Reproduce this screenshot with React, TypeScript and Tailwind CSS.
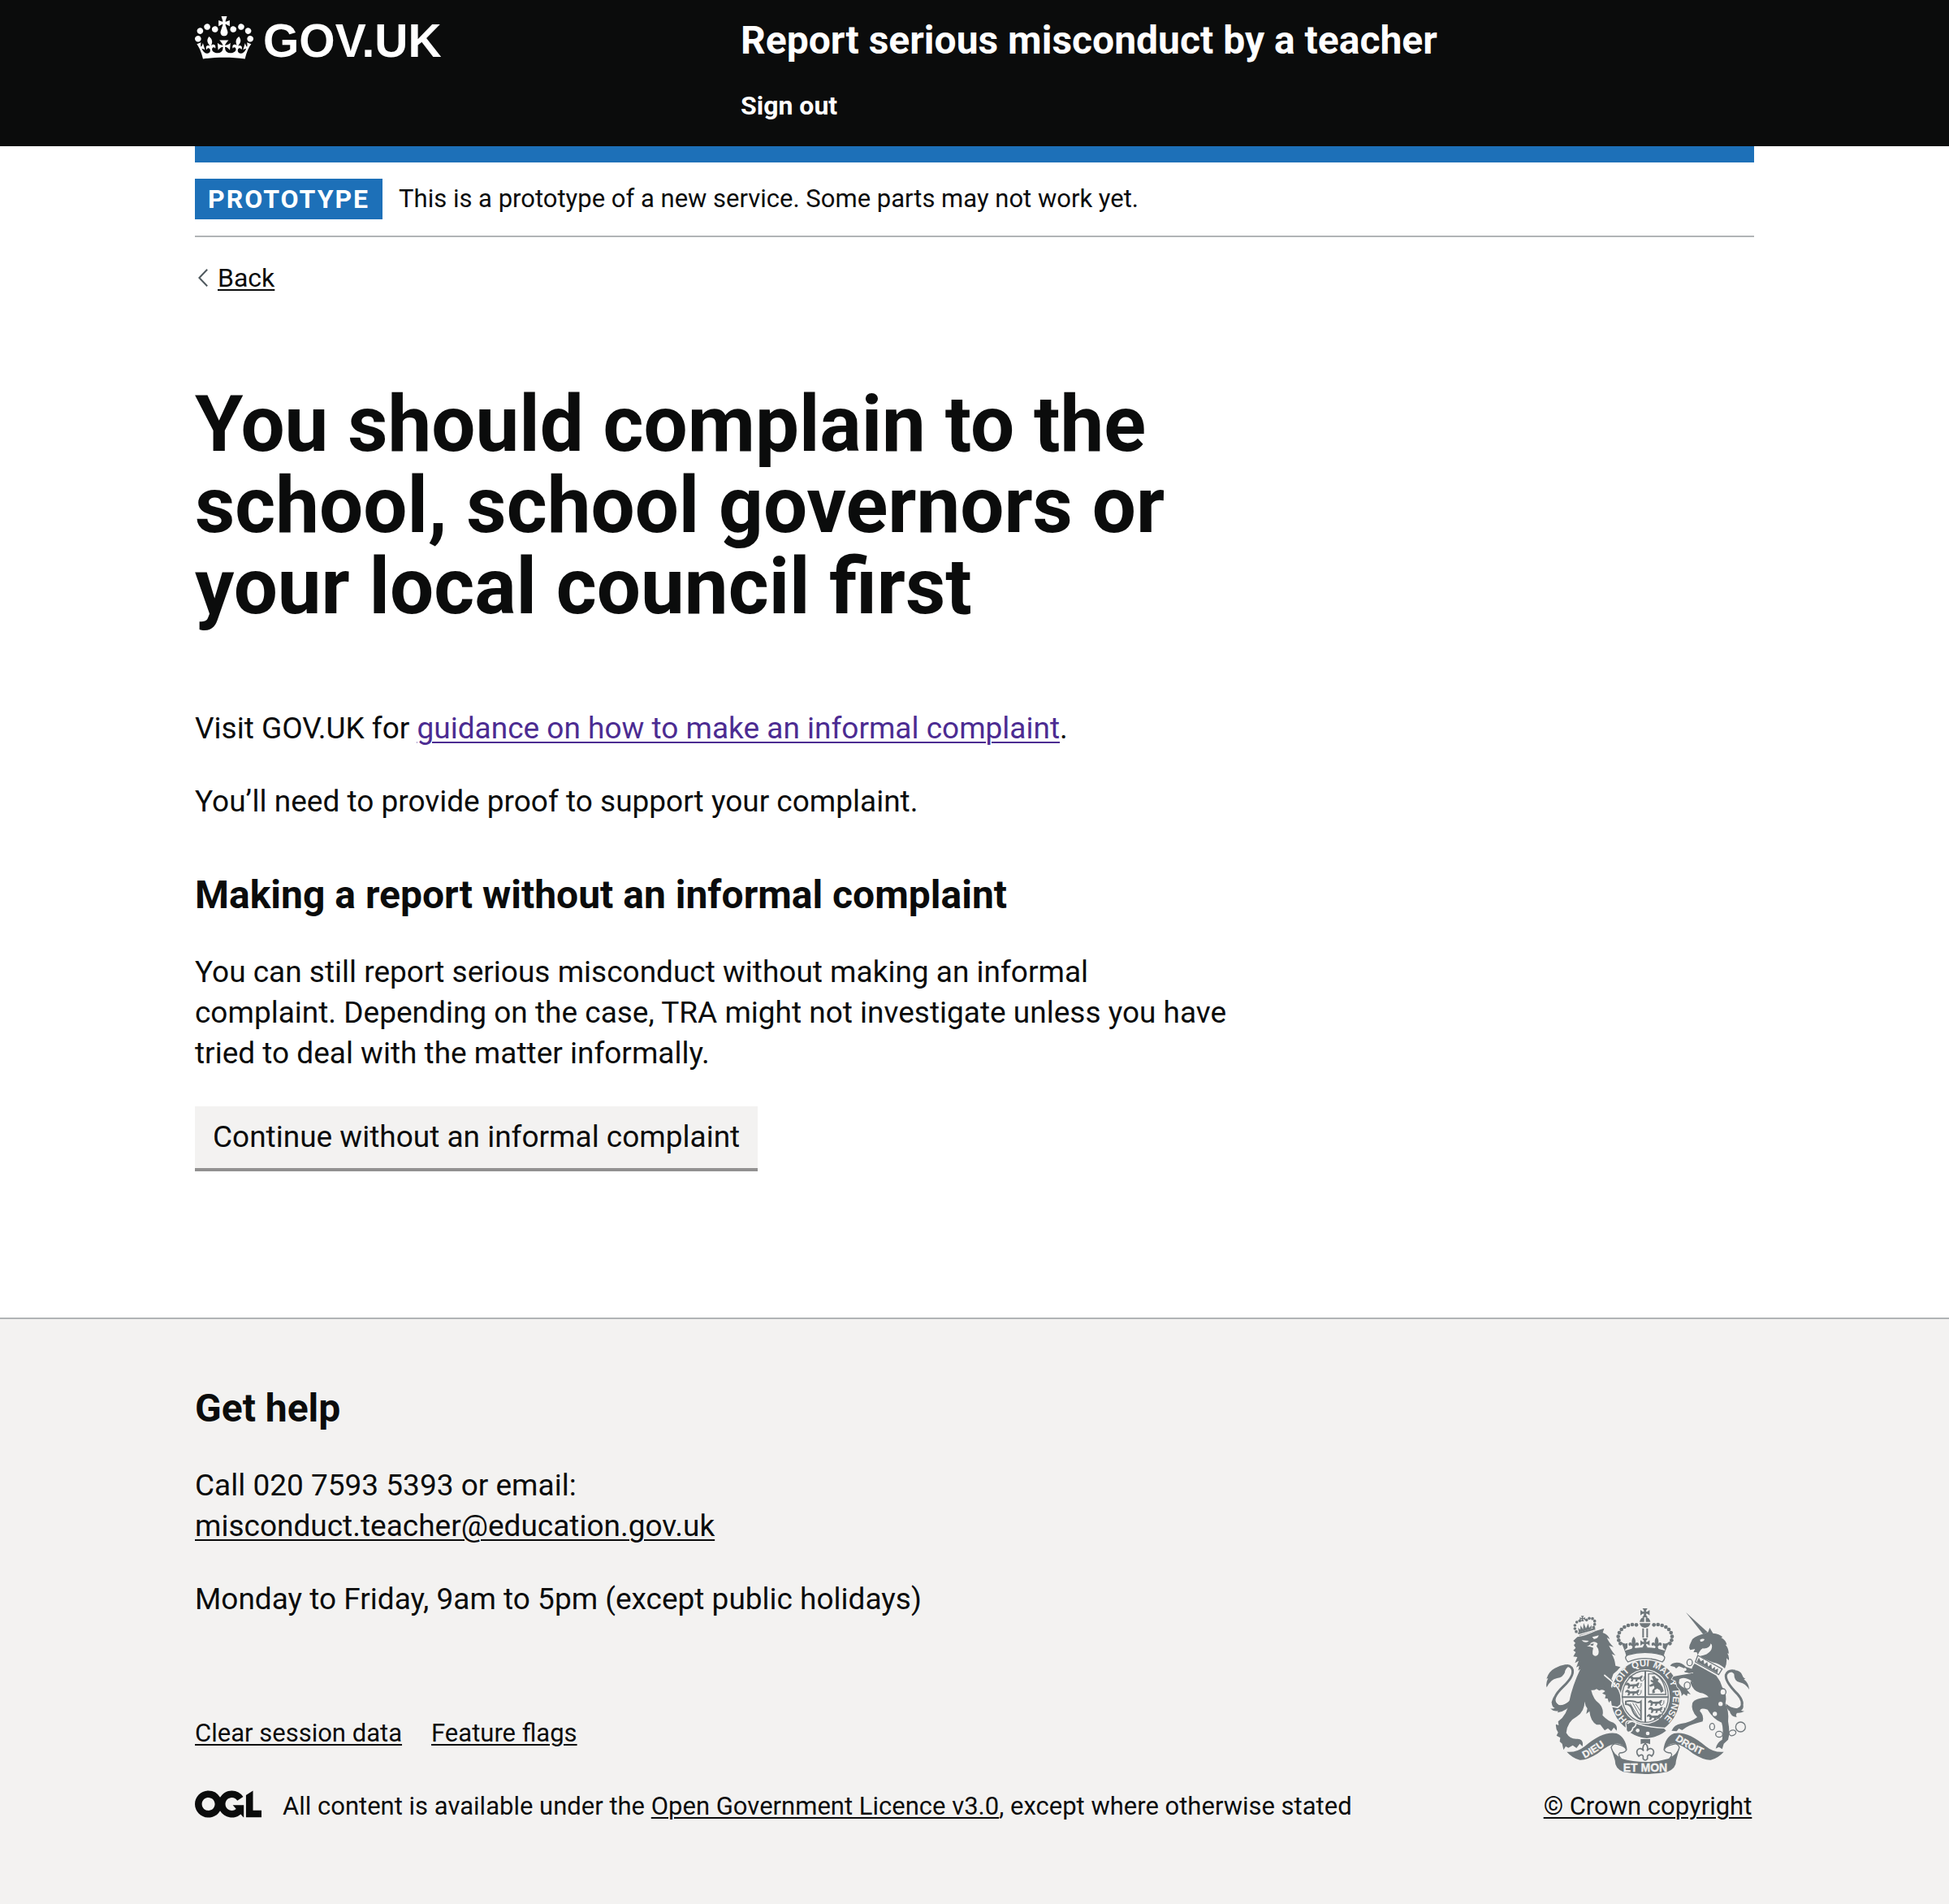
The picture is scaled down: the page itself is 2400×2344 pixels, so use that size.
import type { ReactNode } from "react";

const INK = "#6f777b";
const PAPER = "#f3f2f1";

function Crown() {
  return (
    <svg aria-hidden="true" focusable="false" viewBox="0 0 132 97" className="h-[53px] w-[72px] shrink-0" fill="currentColor">
      <path
        fillRule="evenodd"
        d="M25 30.2c3.5 1.5 7.7-.2 9.1-3.7 1.5-3.6-.2-7.8-3.9-9.2-3.6-1.4-7.6.3-9.1 3.9-1.4 3.5.3 7.5 3.9 9zM9 39.5c3.6 1.5 7.8-.2 9.2-3.7 1.5-3.6-.2-7.8-3.9-9.1-3.6-1.5-7.6.2-9.1 3.8-1.4 3.5.3 7.5 3.8 9zM4.4 57.2c3.5 1.5 7.7-.2 9.1-3.8 1.5-3.6-.2-7.7-3.9-9.1-3.5-1.5-7.6.3-9.1 3.8-1.4 3.5.3 7.6 3.9 9.1zm38.3-21.4c3.5 1.5 7.7-.2 9.1-3.8 1.5-3.6-.2-7.7-3.9-9.1-3.6-1.5-7.6.3-9.1 3.8-1.3 3.6.4 7.7 3.9 9.1zm64.4-5.6c-3.6 1.5-7.8-.2-9.1-3.7-1.5-3.6.2-7.8 3.8-9.2 3.6-1.4 7.7.3 9.2 3.9 1.3 3.5-.4 7.5-3.9 9zm15.9 9.3c-3.6 1.5-7.7-.2-9.1-3.7-1.5-3.6.2-7.8 3.7-9.1 3.6-1.5 7.7.2 9.2 3.8 1.5 3.5-.3 7.5-3.8 9zm4.7 17.7c-3.6 1.5-7.8-.2-9.2-3.8-1.5-3.6.2-7.7 3.9-9.1 3.6-1.5 7.7.3 9.2 3.8 1.3 3.5-.4 7.6-3.9 9.1zM89.3 35.8c-3.6 1.5-7.8-.2-9.2-3.8-1.4-3.6.2-7.7 3.9-9.1 3.6-1.5 7.7.3 9.2 3.8 1.4 3.6-.3 7.7-3.9 9.1zM69.7 17.7l8.9 4.7V9.3l-8.9 2.8c-.2-.3-.5-.6-.9-.9L72.4 0H59.6l3.5 11.2c-.3.3-.6.5-.9.9l-8.8-2.8v13.1l8.8-4.7c.3.3.6.7.9.9l-5 15.4v.1c-.2.8-.4 1.6-.4 2.4 0 4.1 3.1 7.5 7 8.1h.2c.3 0 .7.1 1 .1.4 0 .7 0 1-.1h.2c4-.6 7.1-4.1 7.1-8.1 0-.8-.1-1.7-.4-2.4V34l-5.1-15.4c.4-.2.7-.6 1-.9zM66 92.8c16.9 0 32.8 1.1 47.1 3.2 4-16.9 8.9-26.7 14-33.5l-9.6-3.4c1 4.9 1.1 7.2 0 10.2-1.5-1.4-3-4.3-4.2-8.7L108.6 76c2.8-2 5-3.2 7.5-3.3-4.4 9.4-10 11.9-13.6 11.2-4.3-.8-6.3-4.6-5.6-7.9 1-4.7 5.7-5.9 8-.5 4.3-8.7-3-11.4-7.6-8.8 7.1-7.2 7.9-13.5 2.1-21.1-8 6.1-8.1 12.3-4.5 20.8-4.7-5.4-12.1-2.5-9.5 6.2 3.4-5.2 7.9-2 7.2 3.1-.6 4.3-6.4 7.8-13.5 7.2-10.3-.9-10.9-8-11.2-13.8 2.5-.5 7.1 1.8 11 7.3L80.2 60c-4.1 4.4-8 5.3-12.3 5.4 1.4-4.4 8-11.6 8-11.6H55.5s6.4 7.2 7.9 11.6c-4.2-.1-8-1-12.3-5.4l1.4 16.4c3.9-5.5 8.5-7.7 10.9-7.3-.3 5.8-.9 12.8-11.1 13.8-7.2.6-12.9-2.9-13.5-7.2-.7-5 3.8-8.3 7.1-3.1 2.7-8.7-4.6-11.6-9.4-6.2 3.7-8.5 3.6-14.7-4.6-20.8-5.8 7.6-5 13.9 2.2 21.1-4.7-2.6-11.9.1-7.7 8.8 2.3-5.5 7.1-4.2 8.1.5.7 3.3-1.3 7.1-5.7 7.9-3.5.7-9-1.8-13.5-11.2 2.5.1 4.7 1.3 7.5 3.3l-4.7-15.4c-1.2 4.4-2.7 7.2-4.3 8.7-1.1-3-.9-5.3 0-10.2l-9.5 3.4c5 6.9 9.9 16.7 14 33.5 14.8-2.1 30.8-3.2 47.7-3.2z"
      />
    </svg>
  );
}

function LicenceLogo() {
  return (
    <svg aria-hidden="true" focusable="false" viewBox="0 0 483.2 195.7" className="h-[34px] w-[82px] shrink-0" fill="currentColor">
      <path d="M421.5 142.8V.1l-50.7 32.3v161.1h112.4v-50.7zm-122.3-9.6A47.12 47.12 0 0 1 221 97.8c0-26 21.1-47.1 47.1-47.1 16.7 0 31.4 8.7 39.7 21.8l42.7-27.2A97.63 97.63 0 0 0 268.1 0c-36.5 0-68.3 20.1-85.1 49.7A98 98 0 0 0 97.8 0C43.9 0 0 43.9 0 97.8s43.9 97.8 97.8 97.8c36.5 0 68.3-20.1 85.1-49.7a97.76 97.76 0 0 0 149.6 25.4l19.4 22.2h3v-87.8h-80l24.3 27.5zM97.8 145c-26 0-47.1-21.1-47.1-47.1s21.1-47.1 47.1-47.1 47.1 21.1 47.1 47.1S123.8 145 97.8 145" />
    </svg>
  );
}

const archPearls: [number, number][] = [
  [405, 121], [390, 120], [375, 123], [361, 129], [350, 138], [342, 150], [338, 164], [340, 178], [346, 190],
];
const lionPearls: [number, number][] = [
  [183, 146], [178, 135], [178, 123], [185, 111], [196, 106], [221, 103], [231, 97], [243, 98], [251, 107], [251, 119], [247, 130],
];
const mottoWords: [string, number][] = [["HO", 100], ["SOIT", 235], ["QUI", 319], ["MAL", 399], ["Y", 457], ["PENSE", 538]];

function Passant({ x, y }: { x: number; y: number }) {
  return (
    <g transform={`translate(${x} ${y})`}>
      <path d="M0 6l8-6 6 3 4 4 22-1 8-6 6 2-5 4 3 3-5 2v6l6 4h-8l-3-7-8 1-2 7h-7l3-7-9-1-4 8h-7l3-9-5-4-5 3z" />
      <path d="M52 20q9-6 7-18" fill="none" stroke={INK} strokeWidth="3" />
    </g>
  );
}

function CrossPattee({ x, y, r }: { x: number; y: number; r: number }) {
  return (
    <path
      transform={`translate(${x} ${y}) scale(${r})`}
      d="M-.6-1H.6Q.2-.6.2-.2.6-.2 1-.6V.6Q.6.2.2.2.2.6.6 1H-.6Q-.2.6-.2.2-.6.2-1 .6V-.6Q-.6-.2-.2-.2-.2-.6-.6-1Z"
    />
  );
}

function Fleur({ x, y }: { x: number; y: number }) {
  return (
    <path
      transform={`translate(${x} ${y})`}
      d="M0-22Q11-8 5 5q4-8 11-4 6 5 0 12-5-5-9 0l-3 3 3 8h-14l3-8-3-3q-4-5-9 0-6-7 0-12 7-4 11 4-6-13 5-27Z"
    />
  );
}

function RoyalArms() {
  return (
    <svg aria-hidden="true" focusable="false" viewBox="72 60 750 612" className="h-[204px] w-[250px]" fill={INK} fontFamily='"Liberation Sans", Arial, sans-serif' fontWeight="700">
      {/* Lion: crown, tail, body */}
      {lionPearls.map(([x, y]) => (
        <circle key={`${x}-${y}`} cx={x} cy={y} r="5.5" />
      ))}
      <CrossPattee x={206} y={98} r={10} />
      <path d="M188 150L252 132 255 142 195 161Z" />
      <path d="M192 146l-2-14 8 7 1-16 9 15 2-24 9 20 8-18 4 16 9-10-1 14-47 14Z" />
      <path d="M192 158L258 139" stroke={PAPER} strokeWidth="4" />
      <path d="M170 395Q132 438 108 416Q88 394 134 350Q182 304 166 280Q152 264 134 278" fill="none" stroke={INK} strokeWidth="9" />
      <path d="M158 272Q142 282 141 296Q135 314 112 318Q88 322 74 352Q69 338 79 318L73 320Q82 292 104 281Q124 270 142 268Z" />
      <path d="M100 385Q90 410 92 408Q94 426 104 428Q94 433 87 428Q98 442 116 439L114 445Q150 440 176 402L162 400Q142 420 118 417Q106 410 100 385Z" />
      <path d="M172 180L187 166Q220 160 256 143L286 134L281 150Q300 156 307 174L296 168Q304 188 321 203L304 198Q312 216 328 234L314 229Q325 246 328 272L346 277L334 290L320 302L313 322L338 348Q350 372 350 398L348 412L338 421L330 410L321 419L316 404L303 407L304 394L289 392L292 380L279 374L290 366Q280 356 268 364L258 358Q248 364 238 362Q246 396 268 412Q286 432 280 455Q300 476 320 482Q337 492 332 512L322 500L312 514L300 503L288 511L272 490L258 490Q235 475 232 440L220 450L224 430Q216 420 214 404Q214 440 185 460Q150 478 146 520Q160 545 188 542Q212 544 206 570L196 560L184 576L170 566L154 575L144 570L136 583L131 560L122 552L124 538L110 530L116 518Q106 505 108 488L118 492L116 478Q150 455 158 400Q168 348 198 284L190 290L194 272L183 278L192 254L178 262L187 240L172 238L181 222L172 215L181 206L174 196L180 188Z" />
      <g fill={PAPER}>
        <path d="M203 178L230 180Q216 192 203 178ZM242 166L266 160Q262 174 248 173Z" />
        <path d="M222 200Q236 196 236 188Q250 178 262 190L258 200Q270 214 264 230Q254 242 244 230Q242 220 246 206Q236 200 222 200Z" />
      </g>
      <path d="M236 192l12-2-3 8-9-1Z" />

      {/* Unicorn: horn, head, collar, body, tail */}
      <path d="M588 75L668 148L652 156Z" />
      <path d="M600 206L602 196L612 174Q628 160 655 154L670 148L676 132L688 152Q712 154 724 166L718 168Q736 178 739 194L734 194Q747 208 746 228L741 226Q750 240 746 252L738 244Q740 266 732 282Q710 262 690 260Q660 250 640 236Q672 232 682 212Q688 196 680 190Q676 210 650 208Q640 214 632 232L628 222L616 222L622 210L604 214Z" />
      <path d="M640 176q10-6 17-2-3 10-15 9Z" fill={PAPER} />
      <path d="M632 234L722 284L709 305L623 258Z" fill={PAPER} stroke={INK} strokeWidth="4" />
      <path d="M628 258l8-16 7 14 10-6 3 16 11-8 3 17 12-9 2 18 12-8-1 12 12-6-2 18Z" />
      <path d="M620 264L700 308Q716 328 722 350Q742 378 734 412Q748 440 744 478Q752 520 744 545L728 560L722 580L710 572L698 578Q702 556 722 545Q728 505 720 482Q690 470 668 434Q640 424 640 440Q656 455 650 478Q610 488 588 500L574 510L562 504L554 514L535 512Q545 490 570 486Q605 482 630 462Q605 436 612 410Q620 392 672 388Q660 374 640 372Q615 365 605 335L606 300Q610 275 620 264Z" />
      <path d="M612 306Q596 296 584 296L578 280L562 274L552 282L546 276L530 272Q534 262 554 260Q574 260 588 276L612 284Z" />
      <g fill={PAPER}>
        <circle cx="716" cy="413" r="8" />
        <circle cx="695" cy="450" r="8" />
        <circle cx="584" cy="286" r="6" />
      </g>
      <path d="M738 420Q770 446 790 428Q806 408 778 376Q732 330 736 306Q744 286 770 292" fill="none" stroke={INK} strokeWidth="9" />
      <path d="M752 290Q788 284 796 306Q800 318 808 320L802 322Q820 336 822 360Q808 338 788 334Q766 330 766 302Z" />
      <path d="M736 412Q752 428 776 430L800 418Q802 430 792 438L804 440Q790 448 778 446Q770 452 776 462Q752 458 750 440Q740 436 736 412Z" />

      {/* Garter with motto */}
      <ellipse cx="438" cy="388" rx="133" ry="143" fill={PAPER} />
      <ellipse cx="438" cy="388" rx="127" ry="137" />
      <ellipse cx="438" cy="386" rx="91" ry="101" fill={PAPER} />
      <ellipse cx="438" cy="386" rx="85" ry="95" fill="none" stroke={INK} strokeWidth="4" />
      <path id="motto-arc" d="M438 498A102 112 0 0 1 438 274A102 112 0 0 1 438 498" fill="none" />
      {mottoWords.map(([word, at]) => (
        <text key={word} fontSize="34" fill={PAPER} textAnchor="middle">
          <textPath href="#motto-arc" startOffset={at}>{word}</textPath>
        </text>
      ))}
      <path d="M438 290V482M352 388H524" stroke={INK} strokeWidth="6" fill="none" />
      <g>
        <Passant x={376} y={308} />
        <Passant x={364} y={334} />
        <Passant x={364} y={360} />
        <Passant x={448} y={398} />
        <Passant x={450} y={424} />
        <Passant x={444} y={450} />
      </g>
      <path d="M450 302V378H514Q510 322 474 302Z" fill="none" stroke={INK} strokeWidth="4" />
      <path d="M462 312l10-2 6 8 10 4-4 8 10 8 8 14 4 14-10 6-4-10-10-6-10 6 2 10-10 2 0-12 8-8-2-8-14 4-4-6 16-8-10-6 0-6 10 2Z" />
      <path d="M366 404Q380 400 398 404Q414 412 422 404V470Q400 460 392 440Q386 414 366 414Z" fill="none" stroke={INK} strokeWidth="6" />
      <path d="M382 412L414 466M392 410L418 456M402 412L420 440" stroke={INK} strokeWidth="3" />

      {/* Forelegs resting on the garter */}
      <path d="M290 306L300 330L322 366L336 348Q352 374 350 400L346 416L336 422L330 410L320 420L312 402L302 404L296 380L284 340Z" />
      <path d="M286 306Q312 326 332 348Q354 374 348 416L336 426L314 422" fill="none" stroke={PAPER} strokeWidth="5" />
      <path
        d="M612 330Q580 310 564 322L562 336Q570 350 590 358L606 378L594 374L592 384L580 376L572 384Q574 366 556 350L550 328L536 322L542 312Q570 306 612 300Z"
        stroke={PAPER}
        strokeWidth="5"
        paintOrder="stroke"
      />
      <path d="M606 300H620V334H608Z" />
      <g fill="none" stroke={INK} strokeWidth="4">
        <ellipse cx="602" cy="260" rx="10" ry="12" fill={PAPER} />
        <ellipse cx="593" cy="345" rx="11" ry="13" fill={PAPER} />
        <ellipse cx="725" cy="369" rx="11" ry="12" fill={PAPER} />
        <ellipse cx="685" cy="497" rx="9" ry="12" />
        <ellipse cx="711" cy="525" rx="13" ry="11" />
        <ellipse cx="760" cy="520" rx="13" ry="10" transform="rotate(-20 760 520)" />
        <circle cx="790" cy="498" r="18" />
      </g>

      {/* Strap and buckle */}
      <path d="M366 486Q366 474 384 476Q402 480 410 486Q450 500 508 502L518 512Q486 538 444 542Q408 538 384 522Q364 516 368 502Z" stroke={PAPER} strokeWidth="4" />
      <path d="M372 486Q390 470 404 484Q404 496 392 502Q390 516 376 518" fill="none" stroke={PAPER} strokeWidth="5" />
      <circle cx="410" cy="511" r="7" fill={PAPER} />
      <circle cx="447" cy="522" r="7" fill={PAPER} />

      {/* Royal crown */}
      <CrossPattee x={437} y={76} r={17} />
      <path d="M417 110Q420 94 434 92V110ZM440 92Q454 94 457 110H440ZM417 115H457Q455 130 437 132Q419 130 417 115Z" />
      {archPearls.map(([x, y]) => (
        <g key={x}>
          <circle cx={x} cy={y} r="7" />
          <circle cx={875 - x} cy={y} r="7" />
        </g>
      ))}
      <path d="M430 134V168M445 134V168" stroke={INK} strokeWidth="6" />
      <CrossPattee x={437} y={188} r={17} />
      <Fleur x={395} y={186} />
      <Fleur x={480} y={186} />
      <path d="M348 184Q362 194 372 188V206Q360 214 364 216Q437 192 510 216Q514 212 503 206V188Q514 194 527 184Q514 208 506 236Q437 216 368 236Q360 208 348 184Z" />
      <path d="M374 258Q356 240 374 232Q437 214 500 232Q519 240 501 258Q437 232 374 258Z" fill={PAPER} stroke={INK} strokeWidth="4" />

      {/* Pendant */}
      <path d="M421 543H456V562Q438 552 421 562Z" />
      <path d="M438 558Q452 572 444 586Q456 572 466 582Q474 592 462 606Q450 596 446 606V616Q438 626 430 616V606Q426 596 414 606Q402 592 410 582Q420 572 432 586Q424 572 438 558Z" fill="none" stroke={INK} strokeWidth="5" />

      {/* Scroll */}
      <path d="M148 590Q184 594 214 570Q282 512 332 522Q366 536 371 584Q352 556 326 560Q300 564 262 596Q220 622 196 620Q170 614 148 590Z" />
      <path d="M728 590Q692 594 662 570Q594 512 544 522Q510 536 505 584Q524 556 550 560Q576 564 614 596Q656 622 680 620Q706 614 728 590Z" />
      <path d="M312 574Q318 556 334 562Q366 568 368 584Q362 594 344 594Q336 600 346 612Q320 602 312 574Z" fill={PAPER} stroke={INK} strokeWidth="4" />
      <path d="M564 574Q558 556 542 562Q510 568 508 584Q514 594 532 594Q540 600 530 612Q556 602 564 574Z" fill={PAPER} stroke={INK} strokeWidth="4" />
      <path d="M311 574Q322 604 348 614Q438 640 528 614Q554 604 565 574L552 622Q552 652 520 664Q438 680 356 664Q326 652 326 622Z" />
      <path id="scroll-left" d="M214 614Q262 590 318 546" fill="none" />
      <path id="scroll-right" d="M548 546Q600 584 672 612" fill="none" />
      <g fill={PAPER} stroke={PAPER} strokeWidth="1">
        <text fontSize="37"><textPath href="#scroll-left" startOffset="0">DIEU</textPath></text>
        <text fontSize="36"><textPath href="#scroll-right" startOffset="0">DROIT</textPath></text>
        <text x="438" y="662" fontSize="42" textAnchor="middle">ET MON</text>
      </g>
    </svg>
  );
}

function Container({ children, className = "" }: { children: ReactNode; className?: string }) {
  return <div className={`mx-auto w-4/5 max-w-[1920px] ${className}`}>{children}</div>;
}

function Header() {
  return (
    <header className="bg-[#0b0c0c] text-white">
      <Container className="flex pt-5 pb-[30px]">
        <div className="w-[35%] shrink-0">
          <a href="#home" className="flex w-fit items-start gap-3">
            <Crown />
            <span className="font-['Liberation_Sans',Arial,sans-serif] text-[57px] leading-[60px] font-bold">GOV.UK</span>
          </a>
        </div>
        <div className="font-bold">
          <a href="#service" className="block text-5xl leading-[60px]">Report serious misconduct by a teacher</a>
          <nav aria-label="Menu" className="mt-[30px]">
            <a href="#sign-out" className="block w-fit text-[32px] leading-10">Sign out</a>
          </nav>
        </div>
      </Container>
    </header>
  );
}

export default function App() {
  return (
    <div className="min-h-screen bg-[#f3f2f1] font-[Roboto,'Liberation_Sans',Arial,sans-serif] text-[37px] leading-[50px] text-[#0b0c0c]">
      <Header />
      <div className="bg-white pb-[184px]">
        <Container>
          <div className="h-5 bg-[#1d70b8]" />
          <div className="flex items-center gap-5 border-b-2 border-[#b1b4b6] py-5 text-[31px]">
            <strong className="bg-[#1d70b8] px-4 text-[32px] font-bold tracking-[2px] text-white uppercase">Prototype</strong>
            <span>This is a prototype of a new service. Some parts may not work yet.</span>
          </div>
          <a href="#back" className="mt-[30px] flex w-fit items-center gap-3 pl-1 text-[32px] leading-10">
            <svg aria-hidden="true" viewBox="0 0 12 22" className="h-[22px] w-3" fill="none" stroke="#505a5f" strokeWidth="2">
              <path d="M11.2.8L1.4 11l9.8 10.2" />
            </svg>
            <span className="underline decoration-2 underline-offset-[3px]">Back</span>
          </a>
          <main className="mt-[110px] w-2/3">
            <h1 className="mb-[100px] text-8xl leading-[100px] font-bold">
              You should complain to the school, school governors or your local council first
            </h1>
            <p className="mb-10">
              Visit GOV.UK for{" "}
              <a href="#guidance" className="text-[#4c2c92] underline decoration-2 underline-offset-4">guidance on how to make an informal complaint</a>.
            </p>
            <p className="mb-[60px]">You’ll need to provide proof to support your complaint.</p>
            <h2 className="mb-10 text-5xl leading-[60px] font-bold">Making a report without an informal complaint</h2>
            <p className="mb-10">
              You can still report serious misconduct without making an informal complaint. Depending on the case, TRA might not investigate unless you have tried to deal with the matter informally.
            </p>
            <button type="button" className="block bg-[#f3f2f1] px-[22px] py-[13px] shadow-[0_4px_0_#929191]">
              Continue without an informal complaint
            </button>
          </main>
        </Container>
      </div>
      <footer className="border-t-2 border-[#b1b4b6] pt-20 pb-[100px]">
        <Container className="flex items-end justify-between">
          <div>
            <h2 className="mb-10 text-5xl leading-[60px] font-bold">Get help</h2>
            <p className="mb-10">
              Call 020 7593 5393 or email:
              <br />
              <a href="mailto:misconduct.teacher@education.gov.uk" className="underline decoration-2 underline-offset-4">misconduct.teacher@education.gov.uk</a>
            </p>
            <p className="mb-[120px]">Monday to Friday, 9am to 5pm (except public holidays)</p>
            <ul className="mb-[50px] flex gap-9 text-[31px] leading-10">
              <li><a href="#clear" className="underline decoration-2 underline-offset-[3px]">Clear session data</a></li>
              <li><a href="#flags" className="underline decoration-2 underline-offset-[3px]">Feature flags</a></li>
            </ul>
            <div className="flex items-start gap-[26px] text-[31px] leading-10">
              <LicenceLogo />
              <span>
                All content is available under the{" "}
                <a href="#licence" className="underline decoration-2 underline-offset-[3px]">Open Government Licence v3.0</a>, except where otherwise stated
              </span>
            </div>
          </div>
          <a href="#copyright" className="flex w-[262px] flex-col items-center gap-5 text-[31px] leading-10 underline decoration-2 underline-offset-[3px]">
            <RoyalArms />
            <span>© Crown copyright</span>
          </a>
        </Container>
      </footer>
    </div>
  );
}
